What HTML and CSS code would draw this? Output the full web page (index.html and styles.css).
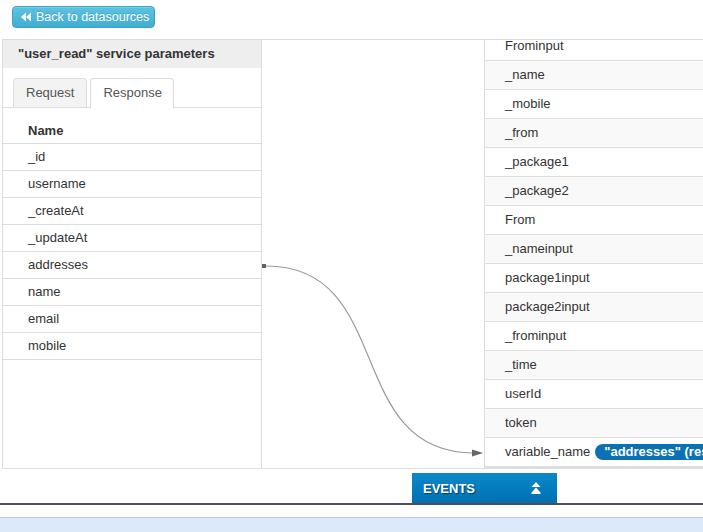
FILE: index.html
```html
<!DOCTYPE html>
<html>
<head>
<meta charset="utf-8">
<link rel="stylesheet" href="styles.css">
</head>
<body>
<div class="page">
  <div class="toolbar">
    <button class="btn-back">
      <svg class="icon-back" width="10" height="10" viewBox="0 0 10 10"><path d="M0 5 L5 0.5 L5 9.5 Z M5 5 L10 0.5 L10 9.5 Z" fill="#fff"/></svg>
      Back to datasources
    </button>
  </div>

  <div class="workspace">
    <div class="left">
      <div class="panel-title">"user_read" service parameters</div>
      <ul class="tabs">
        <li class="tab">Request</li>
        <li class="tab active">Response</li>
      </ul>
      <div class="param-table">
        <div class="param-head">Name</div>
        <div class="param-row">_id</div>
        <div class="param-row">username</div>
        <div class="param-row">_createAt</div>
        <div class="param-row">_updateAt</div>
        <div class="param-row">addresses</div>
        <div class="param-row">name</div>
        <div class="param-row">email</div>
        <div class="param-row">mobile</div>
      </div>
    </div>

    <div class="canvas">
      <svg class="connector" width="222" height="428" viewBox="0 0 222 428">
        <path d="M4 226 C 134 226, 81 413, 212 413" fill="none" stroke="#9a9a9a" stroke-width="1.2"/>
        <rect x="0" y="224" width="4" height="4" fill="#666"/>
        <path d="M221 413 L210 409.5 L210 416.5 Z" fill="#666"/>
      </svg>
    </div>

    <div class="right">
      <div class="var-list">
        <div class="var-row">Frominput</div>
        <div class="var-row alt">_name</div>
        <div class="var-row">_mobile</div>
        <div class="var-row alt">_from</div>
        <div class="var-row">_package1</div>
        <div class="var-row alt">_package2</div>
        <div class="var-row">From</div>
        <div class="var-row alt">_nameinput</div>
        <div class="var-row">package1input</div>
        <div class="var-row alt">package2input</div>
        <div class="var-row">_frominput</div>
        <div class="var-row alt">_time</div>
        <div class="var-row">userId</div>
        <div class="var-row alt">token</div>
        <div class="var-row">variable_name <span class="badge">"addresses" (response)</span></div>
      </div>
    </div>
  </div>

  <div class="events-bar">
    <div class="events-tab">
      <span>EVENTS</span>
      <svg class="icon-up" width="10" height="12" viewBox="0 0 10 12"><path d="M5 0 L9.5 5 L0.5 5 Z M5 5.5 L9.5 10.5 L0.5 10.5 Z M0.5 10.5 H9.5 V12 H0.5 Z" fill="#fff"/></svg>
    </div>
  </div>
  <div class="bottom-panel"></div>
</div>
</body>
</html>
```

FILE: styles.css
```css
html, body {
  margin: 0;
  padding: 0;
  width: 703px;
  height: 532px;
  overflow: hidden;
  background: #fff;
  font-family: "Liberation Sans", Arial, sans-serif;
  font-size: 13px;
  color: #333;
}

.page {
  width: 703px;
  height: 532px;
  overflow: hidden;
}

.toolbar {
  height: 39px;
  padding: 6px 0 0 12px;
  box-sizing: border-box;
}

.btn-back {
  display: flex;
  align-items: center;
  gap: 5px;
  height: 22px;
  width: 143px;
  padding: 0 0 0 8px;
  box-sizing: border-box;
  border: 1px solid #3aa3c6;
  border-radius: 4px;
  background: linear-gradient(#5ec2e0, #3faed3);
  color: #fff;
  font-family: "Liberation Sans", Arial, sans-serif;
  font-size: 12.5px;
  text-shadow: 0 -1px 0 rgba(0,0,0,0.15);
  box-shadow: inset 0 1px 0 rgba(255,255,255,0.2);
}

.icon-back {
  flex: none;
}

.workspace {
  display: flex;
  margin-left: 2px;
  width: 900px;
  height: 430px;
  box-sizing: border-box;
  border: 1px solid #ddd;
  border-right: none;
}

.left {
  width: 259px;
  flex: none;
  border-right: 1px solid #ddd;
  box-sizing: border-box;
}

.panel-title {
  background: #eee;
  font-weight: bold;
  line-height: 18px;
  padding: 5px 15px;
}

.tabs {
  list-style: none;
  margin: 10px 0 0 0;
  padding: 0 0 0 10px;
  display: flex;
  gap: 3px;
  border-bottom: 1px solid #ddd;
}

.tab {
  padding: 5px 12px 5px 12px;
  line-height: 18px;
  border: 1px solid #ddd;
  border-bottom: none;
  border-radius: 4px 4px 0 0;
  background: #f3f3f3;
  color: #555;
  margin-bottom: 0;
}

.tab.active {
  background: #fff;
  color: #555;
  margin-bottom: -1px;
  padding: 5px 11px 6px 12px;
}

.param-head {
  font-weight: bold;
  line-height: 18px;
  padding: 14px 25px 3px;
  border-bottom: 1px solid #ddd;
}

.param-row {
  line-height: 18px;
  padding: 4px 25px;
  border-bottom: 1px solid #ddd;
}

.canvas {
  width: 222px;
  flex: none;
}

.connector {
  display: block;
}

.right {
  flex: 1;
  border-left: 1px solid #ddd;
  overflow: hidden;
  height: 427px;
  border-bottom: 1px solid #ddd;
}

.var-list {
  margin-top: -8px;
}

.var-row {
  line-height: 18px;
  padding: 5px 20px;
  border-bottom: 1px solid #ddd;
  white-space: nowrap;
  display: flex;
  align-items: center;
  gap: 5px;
}

.var-row.alt {
  background: #f9f9f9;
}

.badge {
  display: inline-block;
  background: #0a72b2;
  color: #fff;
  font-weight: bold;
  line-height: 16px;
  padding: 0 9px;
  border-radius: 8px;
  white-space: nowrap;
}

.events-bar {
  margin-top: 4px;
  padding-left: 412px;
  border-bottom: 2px solid #4b4f57;
}

.events-tab {
  width: 145px;
  height: 30px;
  box-sizing: border-box;
  padding: 0 16px 0 11px;
  display: flex;
  align-items: center;
  justify-content: space-between;
  background: linear-gradient(#0a88c9, #0070b2);
  color: #fff;
  font-weight: bold;
  font-size: 13px;
  text-shadow: 1px 1px 1px rgba(0,0,0,0.45);
}

.bottom-panel {
  margin-top: 12px;
  height: 20px;
  background: #dbe9f8;
  border-top: 1px solid #b6cde2;
}
```
